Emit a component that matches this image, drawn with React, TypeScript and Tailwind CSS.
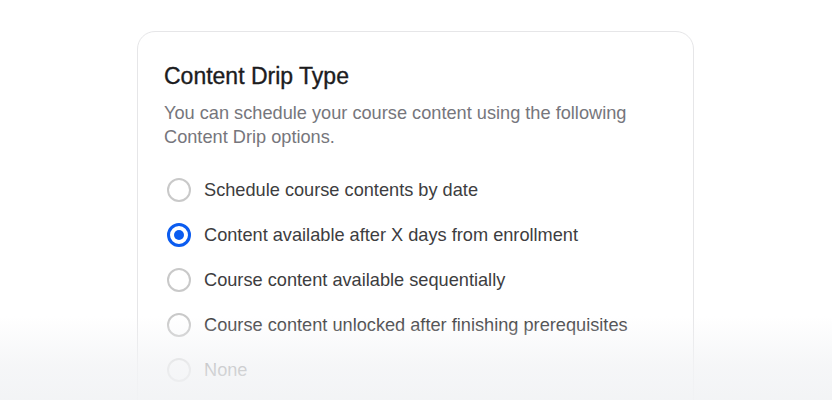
import React from "react";

const options = [
  "Schedule course contents by date",
  "Content available after X days from enrollment",
  "Course content available sequentially",
  "Course content unlocked after finishing prerequisites",
  "None",
];

function Radio({ checked }: { checked: boolean }) {
  if (checked) {
    return (
      <span className="flex h-[24px] w-[24px] shrink-0 items-center justify-center rounded-full border-[3px] border-[#0b5cf0]">
        <span className="h-[10px] w-[10px] rounded-full bg-[#0b5cf0]" />
      </span>
    );
  }
  return <span className="h-[24px] w-[24px] shrink-0 rounded-full border-2 border-[#c9c9c9] bg-white" />;
}

export default function App() {
  return (
    <div
      className="relative h-[400px] w-[832px] overflow-hidden bg-white pt-[31px]"
      style={{ fontFamily: '"Liberation Sans", Arial, Helvetica, sans-serif' }}
    >
      <div className="ml-[137px] h-[420px] w-[557px] rounded-[18px] border-[1.5px] border-[#e6e6e8] bg-white px-[26px] pt-[30px]">
        <h2 className="text-[23px] leading-[28px] text-[#1c1c1e] [-webkit-text-stroke:0.35px_#1c1c1e]">
          Content Drip Type
        </h2>
        <p className="mt-[11px] text-[18.2px] leading-[24px] text-[#76767c]">
          You can schedule your course content using the following
          <br />
          Content Drip options.
        </p>
        <div className="mt-[18px] flex flex-col">
          {options.map((label, i) => (
            <label key={label} className="flex h-[45px] items-center gap-[13px] pl-[3px]">
              <Radio checked={i === 1} />
              <span className="text-[18.2px] leading-[24px] text-[#3d3d40]">{label}</span>
            </label>
          ))}
        </div>
      </div>
      {/* soft fade at the bottom edge */}
      <div className="pointer-events-none absolute inset-x-0 bottom-0 h-[84px] bg-[linear-gradient(to_bottom,rgba(243,244,246,0)_0%,rgba(243,244,246,0.78)_58%,rgba(242,243,245,0.94)_100%)]" />
    </div>
  );
}
